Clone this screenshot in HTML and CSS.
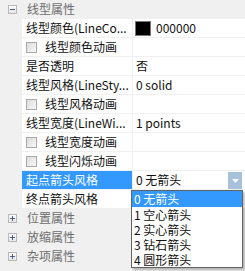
FILE: index.html
```html
<!DOCTYPE html>
<html>
<head>
<meta charset="utf-8">
<link rel="stylesheet" href="styles.css">
</head>
<body>
<div class="grid">
  <div class="row cat">
    <span class="tog minus"></span><span class="cat-label">线型属性</span>
  </div>
  <div class="row prop">
    <div class="gutter"></div>
    <div class="name">线型颜色(LineCo...</div>
    <div class="value"><span class="swatch"></span>000000</div>
  </div>
  <div class="row prop">
    <div class="gutter"></div>
    <div class="name chk"><span class="box"></span>线型颜色动画</div>
    <div class="value"></div>
  </div>
  <div class="row prop">
    <div class="gutter"></div>
    <div class="name">是否透明</div>
    <div class="value">否</div>
  </div>
  <div class="row prop">
    <div class="gutter"></div>
    <div class="name">线型风格(LineSty...</div>
    <div class="value">0 solid</div>
  </div>
  <div class="row prop">
    <div class="gutter"></div>
    <div class="name chk"><span class="box"></span>线型风格动画</div>
    <div class="value"></div>
  </div>
  <div class="row prop">
    <div class="gutter"></div>
    <div class="name">线型宽度(LineWi...</div>
    <div class="value">1 points</div>
  </div>
  <div class="row prop">
    <div class="gutter"></div>
    <div class="name chk"><span class="box"></span>线型宽度动画</div>
    <div class="value"></div>
  </div>
  <div class="row prop">
    <div class="gutter"></div>
    <div class="name chk"><span class="box"></span>线型闪烁动画</div>
    <div class="value"></div>
  </div>
  <div class="row prop">
    <div class="gutter"></div>
    <div class="name selected">起点箭头风格</div>
    <div class="value combo"><span class="combo-text">0 无箭头</span><span class="combo-btn"><svg width="7" height="4" viewBox="0 0 7 4"><path d="M0 0h7L3.5 4z" fill="#fff"/></svg></span></div>
  </div>
  <div class="row prop">
    <div class="gutter"></div>
    <div class="name">终点箭头风格</div>
    <div class="value"></div>
  </div>
  <div class="row cat">
    <span class="tog plus"></span><span class="cat-label">位置属性</span>
  </div>
  <div class="row cat">
    <span class="tog plus"></span><span class="cat-label">放缩属性</span>
  </div>
  <div class="row cat">
    <span class="tog plus"></span><span class="cat-label">杂项属性</span>
  </div>
</div>
<ul class="list">
  <li class="active">0 无箭头</li>
  <li>1 空心箭头</li>
  <li>2 实心箭头</li>
  <li>3 钻石箭头</li>
  <li>4 圆形箭头</li>
</ul>
</body>
</html>
```
FILE: styles.css
```css
html, body {
  margin: 0;
  padding: 0;
  background: #f0f0f0;
  width: 245px;
  height: 271px;
  overflow: hidden;
  font-family: "Noto Sans CJK SC", "Noto Sans", sans-serif;
  font-size: 12px;
  color: #111;
}
.grid {
  display: flex;
  flex-direction: column;
  width: 245px;
}
.row {
  display: flex;
  height: 18px;
  border-bottom: 1px solid #f0f0f0;
  align-items: stretch;
}
.cat {
  background: #f0f0f0;
  align-items: center;
  color: #6d6d6d;
}
.tog {
  position: relative;
  box-sizing: border-box;
  width: 9px;
  height: 9px;
  margin-left: 8px;
  border: 1px solid #b8b8b8;
  background: linear-gradient(#ffffff, #e6e6e6);
}
.tog::before {
  content: "";
  position: absolute;
  left: 1px;
  top: 3px;
  width: 5px;
  height: 1px;
  background: #4a5e8a;
}
.plus::after {
  content: "";
  position: absolute;
  left: 3px;
  top: 1px;
  width: 1px;
  height: 5px;
  background: #4a5e8a;
}
.cat-label {
  margin-left: 10px;
  line-height: 18px;
}
.gutter {
  width: 22px;
  flex: none;
  background: #f0f0f0;
}
.name {
  width: 110px;
  flex: none;
  background: #fff;
  padding-left: 4px;
  box-sizing: border-box;
  line-height: 18px;
  white-space: nowrap;
  overflow: hidden;
  display: flex;
  align-items: center;
}
.name.selected {
  background: #3399ff;
  color: #fff;
}
.chk .box {
  box-sizing: border-box;
  width: 11px;
  height: 11px;
  border: 1px solid #a8a8a8;
  background: linear-gradient(135deg, #dcdcdc, #f8f8f8);
  margin-right: 8px;
  flex: none;
}
.value {
  flex: 1;
  background: #fff;
  border-left: 1px solid #f0f0f0;
  padding-left: 3px;
  display: flex;
  align-items: center;
  line-height: 18px;
  white-space: nowrap;
}
.swatch {
  box-sizing: border-box;
  width: 16px;
  height: 15px;
  background: #000;
  border: 1px solid #777;
  margin-right: 5px;
  margin-left: -1px;
}
.combo {
  padding-left: 3px;
  padding-right: 3px;
  justify-content: space-between;
}
.combo-btn {
  width: 14px;
  height: 17px;
  background: #a7c0dc;
  display: flex;
  align-items: center;
  justify-content: center;
  align-self: flex-end;
}
.list {
  position: absolute;
  left: 131px;
  top: 190px;
  width: 110px;
  margin: 0;
  padding: 0;
  list-style: none;
  background: #fff;
  border: 1px solid #646464;
  box-shadow: 2px 2px 2px rgba(0,0,0,0.25);
}
.list li {
  height: 15px;
  line-height: 15px;
  padding-left: 2px;
  white-space: nowrap;
  overflow: hidden;
}
.list li.active {
  height: 16px;
  line-height: 16px;
  background: #3399ff;
  color: #fff;
}
```
